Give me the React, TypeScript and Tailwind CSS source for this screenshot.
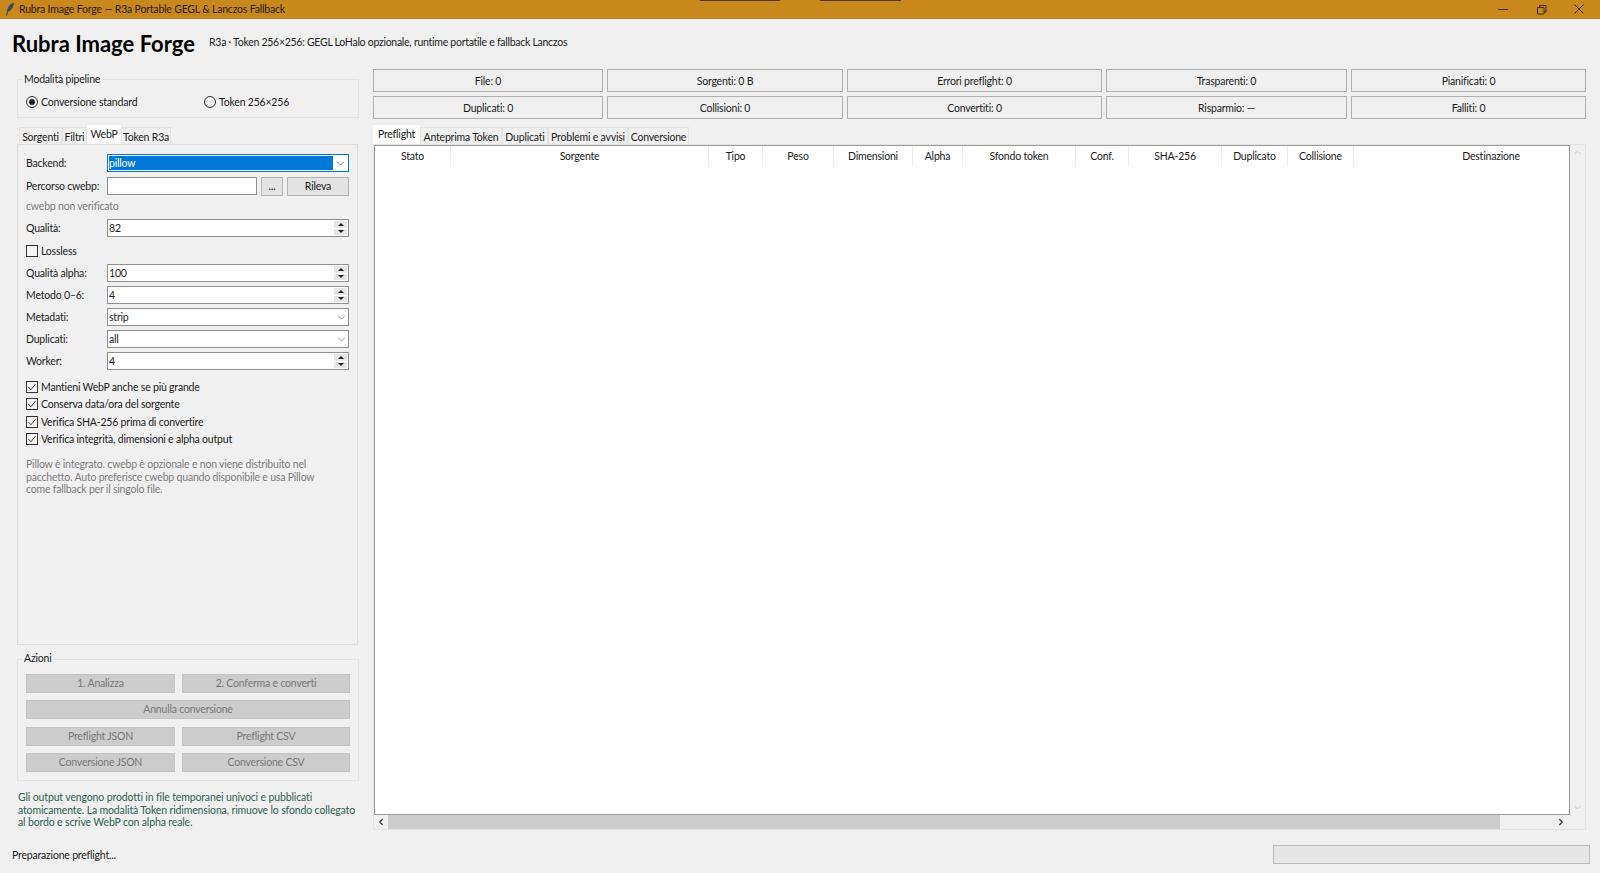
import { ChevronDown, ChevronLeft, ChevronRight, ChevronUp } from 'lucide-react'

const statRows = [
  ['File: 0', 'Sorgenti: 0 B', 'Errori preflight: 0', 'Trasparenti: 0', 'Pianificati: 0'],
  ['Duplicati: 0', 'Collisioni: 0', 'Convertiti: 0', 'Risparmio: —', 'Falliti: 0'],
]

const colonne = ['Stato', 'Sorgente', 'Tipo', 'Peso', 'Dimensioni', 'Alpha', 'Sfondo token', 'Conf.', 'SHA-256', 'Duplicato', 'Collisione', 'Destinazione']

const controlliSpunta = [
  'Mantieni WebP anche se più grande',
  'Conserva data/ora del sorgente',
  'Verifica SHA-256 prima di convertire',
  'Verifica integrità, dimensioni e alpha output',
]

function Checkbox({ checked }: { checked?: boolean }) {
  return (
    <span className="w-[12px] h-[12px] border border-[#333] bg-[#f4f4f4] flex items-center justify-center shrink-0">
      {checked && (
        <svg width="10" height="10" viewBox="0 0 11 11" fill="none" stroke="#222" strokeWidth="1">
          <path d="M1.5 5.5 4.3 8.5 9.5 2.2" />
        </svg>
      )}
    </span>
  )
}

function Radio({ checked, label }: { checked?: boolean; label: string }) {
  return (
    <div className="flex items-center gap-[3px]">
      <span className="w-[12px] h-[12px] rounded-full border border-[#333] bg-[#f4f4f4] flex items-center justify-center">
        {checked && <span className="w-[6px] h-[6px] rounded-full bg-[#222]" />}
      </span>
      <span>{label}</span>
    </div>
  )
}

function Spinner({ value }: { value: string }) {
  return (
    <div className="flex-1 h-[18px] bg-white border border-[#8f8f8f] flex items-center pl-[1px] pr-[1px]">
      <span className="flex-1">{value}</span>
      <div className="w-[13px] h-[14px] flex flex-col gap-px">
        <span className="flex-1 bg-[#e6e6e6] flex items-center justify-center">
          <span className="border-x-[3px] border-x-transparent border-b-[3px] border-b-[#222]" />
        </span>
        <span className="flex-1 bg-[#e6e6e6] flex items-center justify-center">
          <span className="border-x-[3px] border-x-transparent border-t-[3px] border-t-[#222]" />
        </span>
      </div>
    </div>
  )
}

function Combo({ value }: { value: string }) {
  return (
    <div className="flex-1 h-[18px] bg-white border border-[#8f8f8f] flex items-center pl-[1px]">
      <span className="flex-1">{value}</span>
      <ChevronDown className="w-[13px] h-[13px] text-[#666]" strokeWidth={1.25} />
    </div>
  )
}

function Riga({ label, children, className }: { label: string; children: React.ReactNode; className?: string }) {
  return (
    <div className={`flex items-center h-[18px] ${className ?? ''}`}>
      <span className="w-[81px] shrink-0">{label}</span>
      {children}
    </div>
  )
}

function Bottone({ label, className }: { label: string; className?: string }) {
  return (
    <div className={`h-[19px] bg-[#cccccc] text-[#787878] border border-[#c4c4c4] flex items-center justify-center ${className ?? ''}`}>
      {label}
    </div>
  )
}

export default function App() {
  return (
    <div className="relative w-[1600px] h-[873px] overflow-hidden flex flex-col bg-[#f0f0f0] text-[#1c1c1c] text-[10.5px] tracking-[-0.2px] leading-none whitespace-nowrap font-['Lato','Noto_Sans',sans-serif]">
      {/* barra del titolo */}
      <div className="h-[19px] shrink-0 bg-[#c8881c] border-b border-[#b98024] flex items-center pl-[5px] pr-[2px] text-[#2a1c06]">
        <svg width="10" height="14" viewBox="0 0 10 14" className="mr-[4px]">
          <path d="M9 .5C5 1.5 2.5 5 2 9L1 13.5 2.2 13.6 3 10C6 9 8.5 5.5 9 .5Z" fill="#3c4d63" />
        </svg>
        <span>Rubra Image Forge — R3a Portable GEGL &amp; Lanczos Fallback</span>
        <div className="ml-auto flex items-center text-[#3a2a10]">
          <svg width="38" height="18" viewBox="0 0 38 18" fill="none" stroke="currentColor">
            <path d="M14 9.5h10" />
          </svg>
          <svg width="38" height="18" viewBox="0 0 38 18" fill="none" stroke="currentColor">
            <path d="M15.5 7.5h6.5v6.5h-6.5zM17.5 7.5v-2h6.5v6.5h-2" />
          </svg>
          <svg width="38" height="18" viewBox="0 0 38 18" fill="none" stroke="currentColor">
            <path d="M14.5 4.5l9 9M23.5 4.5l-9 9" />
          </svg>
        </div>
      </div>
      <div className="absolute top-0 left-[700px] w-[80px] h-px bg-[#4e3410]" />
      <div className="absolute top-0 left-[820px] w-[81px] h-px bg-[#4e3410]" />

      {/* intestazione */}
      <div className="h-[50px] shrink-0 flex items-center pl-[12px] pb-[1px]">
        <h1 className="w-[197px] text-[22px] tracking-normal font-bold text-black">Rubra Image Forge</h1>
        <span className="pb-[3px] tracking-[-0.27px]">R3a · Token 256×256: GEGL LoHalo opzionale, runtime portatile e fallback Lanczos</span>
      </div>

      <div className="flex-1 min-h-0 flex pl-[17px] pr-[14px] gap-[14px]">
        {/* colonna sinistra */}
        <div className="w-[342px] shrink-0 flex flex-col">
          <div className="mt-[10px] h-[39px] border border-[#e2e2e2] relative flex items-center pl-[8px] pt-[7px]">
            <span className="absolute -top-[6px] left-[5px] px-px bg-[#f0f0f0]">Modalità pipeline</span>
            <div className="w-[178px]"><Radio checked label="Conversione standard" /></div>
            <Radio label="Token 256×256" />
          </div>

          <div className="mt-[8px] h-[18px] flex items-end pl-[2px]">
            <div className="h-[17px] w-[43px] pt-[2px] bg-[#f0f0f0] border border-b-0 border-[#e2e2e2] flex items-center justify-center">Sorgenti</div>
            <div className="h-[17px] w-[25px] pt-[2px] bg-[#f0f0f0] border border-b-0 border-[#e2e2e2] flex items-center justify-center">Filtri</div>
            <div className="h-[19px] w-[34px] bg-white flex items-center justify-center">WebP</div>
            <div className="h-[17px] w-[50px] pt-[2px] bg-[#f0f0f0] border border-b-0 border-[#e2e2e2] flex items-center justify-center">Token R3a</div>
          </div>

          <div className="h-[501px] w-[341px] border border-[#dedede] pt-[9px] px-[8px] flex flex-col">
            <div className="flex items-center h-[18px]">
              <span className="w-[81px] shrink-0">Backend:</span>
              <div className="flex-1 h-[18px] bg-white border border-[#0078d7] flex items-center p-px">
                <span className="flex-1 h-full bg-[#0078d7] text-white flex items-center">pillow</span>
                <ChevronDown className="w-[13px] h-[13px] ml-[1px] text-[#444]" strokeWidth={1.25} />
              </div>
            </div>
            <Riga label="Percorso cwebp:" className="mt-[5px]">
              <div className="w-[150px] h-[18px] bg-white border border-[#8f8f8f]" />
              <div className="ml-[4px] w-[22px] h-[19px] bg-[#e3e3e3] border border-[#b4b4b4] flex items-center justify-center">...</div>
              <div className="ml-[4px] flex-1 h-[19px] bg-[#e3e3e3] border border-[#b4b4b4] flex items-center justify-center">Rileva</div>
            </Riga>
            <p className="mt-[4px] h-[15px] flex items-center text-[#7c7c7c]">cwebp non verificato</p>
            <Riga label="Qualità:" className="mt-[5px]"><Spinner value="82" /></Riga>
            <div className="mt-[5px] h-[18px] flex items-center gap-[3px]">
              <Checkbox />
              <span>Lossless</span>
            </div>
            <Riga label="Qualità alpha:" className="mt-[4px]"><Spinner value="100" /></Riga>
            <Riga label="Metodo 0–6:" className="mt-[4px]"><Spinner value="4" /></Riga>
            <Riga label="Metadati:" className="mt-[4px]"><Combo value="strip" /></Riga>
            <Riga label="Duplicati:" className="mt-[4px]"><Combo value="all" /></Riga>
            <Riga label="Worker:" className="mt-[4px]"><Spinner value="4" /></Riga>
            <div className="mt-[8px] flex flex-col">
              {controlliSpunta.map(testo => (
                <div key={testo} className="h-[17.5px] flex items-center gap-[3px]">
                  <Checkbox checked />
                  <span>{testo}</span>
                </div>
              ))}
            </div>
            <p className="mt-[10px] leading-[12.7px] text-[#7c7c7c]">
              Pillow è integrato. cwebp è opzionale e non viene distribuito nel<br />
              pacchetto. Auto preferisce cwebp quando disponibile e usa Pillow<br />
              come fallback per il singolo file.
            </p>
          </div>

          <div className="mt-[14px] h-[122px] border border-[#e2e2e2] relative px-[8px] pt-[14px] flex flex-col">
            <span className="absolute -top-[7px] left-[5px] px-px bg-[#f0f0f0]">Azioni</span>
            <div className="grid grid-cols-[149px_168px] gap-x-[7px]">
              <Bottone label="1. Analizza" />
              <Bottone label="2. Conferma e converti" />
              <Bottone label="Annulla conversione" className="col-span-2 mt-[7px]" />
              <Bottone label="Preflight JSON" className="mt-[8px]" />
              <Bottone label="Preflight CSV" className="mt-[8px]" />
              <Bottone label="Conversione JSON" className="mt-[7px]" />
              <Bottone label="Conversione CSV" className="mt-[7px]" />
            </div>
          </div>

          <p className="mt-[10px] ml-[1px] leading-[12.7px] tracking-[-0.14px] text-[#2f6152]">
            Gli output vengono prodotti in file temporanei univoci e pubblicati<br />
            atomicamente. La modalità Token ridimensiona, rimuove lo sfondo collegato<br />
            al bordo e scrive WebP con alpha reale.
          </p>
        </div>

        {/* colonna destra */}
        <div className="flex-1 min-w-0 flex flex-col">
          <div className="grid grid-cols-[230px_236px_255px_241px_235px] gap-x-[4px] gap-y-[4px]">
            {statRows.flat().map(testo => (
              <div key={testo} className="h-[23px] pt-[2px] border-[1.5px] border-[#b0b0b0] flex items-center justify-center">{testo}</div>
            ))}
          </div>

          <div className="mt-[6px] h-[19px] flex items-end">
            <div className="h-[19px] w-[47px] bg-white flex items-center justify-center">Preflight</div>
            <div className="h-[17px] w-[82px] pt-[2px] border border-b-0 border-[#e2e2e2] flex items-center justify-center">Anteprima Token</div>
            <div className="h-[17px] w-[46px] pt-[2px] border border-b-0 border-[#e2e2e2] flex items-center justify-center">Duplicati</div>
            <div className="h-[17px] w-[80px] pt-[2px] border border-b-0 border-[#e2e2e2] flex items-center justify-center">Problemi e avvisi</div>
            <div className="h-[17px] w-[61px] pt-[2px] border border-b-0 border-[#e2e2e2] flex items-center justify-center">Conversione</div>
          </div>

          <div className="h-[686px] border border-[#e2e2e2] grid grid-cols-[1fr_15px] grid-rows-[1fr_14px]">
            <div className="bg-white border border-[#9a9a9a] overflow-hidden">
              <div className="h-[20px] grid grid-cols-[76px_258px_54px_71px_79px_50px_113px_53px_93px_66px_66px_274px]">
                {colonne.map(nome => (
                  <div key={nome} className="border-r border-[#ececec] last:border-r-0 flex items-center justify-center">{nome}</div>
                ))}
              </div>
            </div>
            <div className="flex flex-col items-center justify-between py-[2px] text-[#b4b4b4]">
              <ChevronUp className="w-[11px] h-[11px]" strokeWidth={1.5} />
              <ChevronDown className="w-[11px] h-[11px]" strokeWidth={1.5} />
            </div>
            <div className="flex items-center text-[#333]">
              <div className="w-[14px] flex justify-center"><ChevronLeft className="w-[10px] h-[10px]" strokeWidth={3} /></div>
              <div className="w-[1112px] h-full bg-[#cdcdcd]" />
              <div className="ml-auto w-[14px] mr-[2px] flex justify-center"><ChevronRight className="w-[10px] h-[10px]" strokeWidth={3} /></div>
            </div>
            <div />
          </div>
        </div>
      </div>

      {/* barra di stato */}
      <div className="h-[43px] shrink-0 flex items-center pl-[12px] pr-[10px] pt-[5px]">
        <span className="pt-[2px]">Preparazione preflight...</span>
        <div className="ml-auto w-[317px] h-[19px] bg-[#e6e6e6] border border-[#bcbcbc]" />
      </div>
    </div>
  )
}
